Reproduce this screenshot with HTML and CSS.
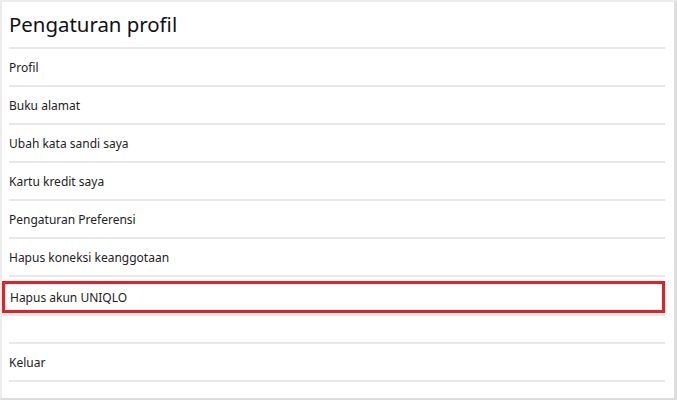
FILE: index.html
```html
<!DOCTYPE html>
<html lang="id">
<head>
<meta charset="utf-8">
<title>Pengaturan profil</title>
<link rel="stylesheet" href="styles.css">
</head>
<body>
<div class="frame">
  <h1 class="title">Pengaturan profil</h1>
  <ul class="menu">
    <li class="item">Profil</li>
    <li class="item">Buku alamat</li>
    <li class="item">Ubah kata sandi saya</li>
    <li class="item">Kartu kredit saya</li>
    <li class="item">Pengaturan Preferensi</li>
    <li class="item">Hapus koneksi keanggotaan</li>
    <li class="item item-marked"><span class="mark">Hapus akun UNIQLO</span></li>
  </ul>
  <ul class="menu menu-logout">
    <li class="item">Keluar</li>
  </ul>
</div>
</body>
</html>
```

FILE: styles.css
```css
html, body {
  margin: 0;
  padding: 0;
  background: #ffffff;
}

body {
  width: 677px;
  height: 406px;
  font-family: "Noto Sans", "Liberation Sans", sans-serif;
  color: #1f1f1f;
}

.frame {
  box-sizing: border-box;
  width: 677px;
  height: 400px;
  border-top: 2px solid #ececec;
  border-left: 2px solid #ececec;
  border-right: 3px solid #dedede;
  border-bottom: 2px solid #dcdcdc;
  padding: 0 9px 0 7px;
}

.title {
  margin: 0;
  height: 47px;
  box-sizing: border-box;
  padding-top: 8px;
  font-size: 20.4px;
  font-weight: 400;
  line-height: 28px;
  color: #111;
  border-bottom: 2px solid #e8e8e8;
}

.menu {
  list-style: none;
  margin: 0;
  padding: 0;
}

.item {
  height: 36px;
  display: flex;
  align-items: center;
  font-size: 12px;
  color: #222;
  border-bottom: 2px solid #e8e8e8;
}

.item-marked {
  margin-left: -8px;
  padding: 4px 0 0 1px;
  align-items: flex-start;
  box-sizing: border-box;
  height: 39px;
}

.mark {
  box-sizing: border-box;
  flex: 1;
  height: 32px;
  display: flex;
  align-items: center;
  padding-left: 5px;
  border: 3px solid #ec1c24;
}

.menu-logout {
  margin-top: 26px;
  border-top: 2px solid #e8e8e8;
}
```
